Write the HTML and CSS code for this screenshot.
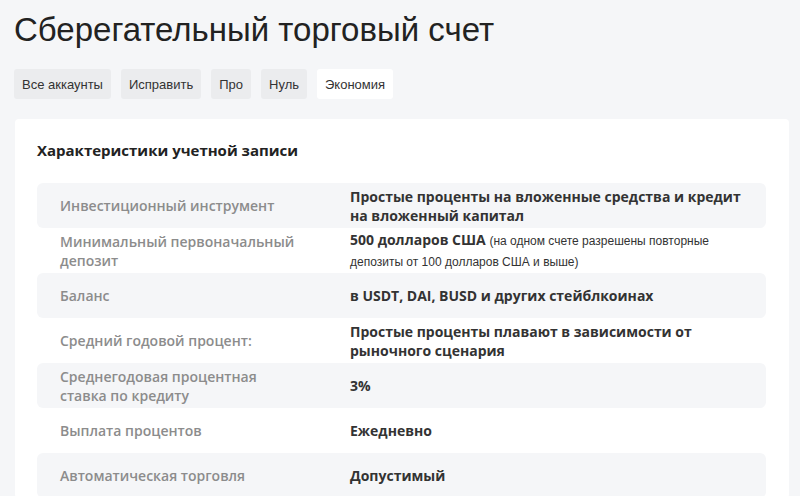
FILE: index.html
```html
<!DOCTYPE html>
<html lang="ru">
<head>
  <meta charset="UTF-8">
  <meta name="viewport" content="width=device-width, initial-scale=1.0">
  <title>Сберегательный торговый счет</title>
  <link rel="stylesheet" href="styles.css">
</head>
<body>
  <h1 class="title">Сберегательный торговый счет</h1>

  <div class="tabs">
    <button class="tab">Все аккаунты</button>
    <button class="tab">Исправить</button>
    <button class="tab">Про</button>
    <button class="tab">Нуль</button>
    <button class="tab active">Экономия</button>
  </div>

  <div class="card">
    <h2 class="card-title">Характеристики учетной записи</h2>
    <div class="specs">
      <div class="row">
        <div class="label">Инвестиционный инструмент</div>
        <div class="value">Простые проценты на вложенные средства и кредит на вложенный капитал</div>
      </div>
      <div class="row">
        <div class="label">Минимальный первоначальный депозит</div>
        <div class="value">500 долларов США <span class="note">(на одном счете разрешены повторные депозиты от 100 долларов США и выше)</span></div>
      </div>
      <div class="row">
        <div class="label">Баланс</div>
        <div class="value">в USDT, DAI, BUSD и других стейблкоинах</div>
      </div>
      <div class="row">
        <div class="label">Средний годовой процент:</div>
        <div class="value">Простые проценты плавают в зависимости от рыночного сценария</div>
      </div>
      <div class="row">
        <div class="label">Среднегодовая процентная ставка по кредиту</div>
        <div class="value">3%</div>
      </div>
      <div class="row">
        <div class="label">Выплата процентов</div>
        <div class="value">Ежедневно</div>
      </div>
      <div class="row">
        <div class="label">Автоматическая торговля</div>
        <div class="value">Допустимый</div>
      </div>
    </div>
  </div>
</body>
</html>
```

FILE: styles.css
```css
body {
  margin: 0;
  padding: 0 11px 0 14px;
  background: #f5f6f8;
  font-family: "Liberation Sans", Arial, sans-serif;
  color: #222;
}

.title {
  margin: 11px 0 0;
  font-size: 33px;
  font-weight: normal;
  line-height: 37px;
  color: #222;
}

.tabs {
  display: flex;
  gap: 10px;
  margin-top: 21px;
}

.tab {
  height: 30px;
  padding: 0 8px;
  border: none;
  border-radius: 3px;
  background: #ebecee;
  font-family: "Liberation Sans", Arial, sans-serif;
  font-size: 13px;
  color: #333;
}

.tab.active {
  background: #ffffff;
}

.card {
  margin-top: 20px;
  margin-left: 1px;
  padding: 19px 23px 0 22px;
  background: #ffffff;
  border-radius: 4px;
  font-family: "Open Sans", sans-serif;
}

.card-title {
  margin: 0 0 21px;
  font-size: 15px;
  font-weight: 700;
  line-height: 24px;
  color: #222;
}

.row {
  display: grid;
  grid-template-columns: 313px 1fr;
  align-items: center;
  min-height: 45px;
  border-radius: 6px;
}

.row:nth-child(odd) {
  background: #f5f6f8;
}

.label {
  padding: 0 50px 0 23px;
  font-size: 14px;
  font-weight: 600;
  line-height: 19px;
  color: #8c8c8c;
}

.value {
  padding-right: 20px;
  font-size: 14px;
  font-weight: 700;
  line-height: 19px;
  color: #333;
}

.note {
  font-family: "Liberation Sans", Arial, sans-serif;
  font-size: 12px;
  font-weight: normal;
}
```
